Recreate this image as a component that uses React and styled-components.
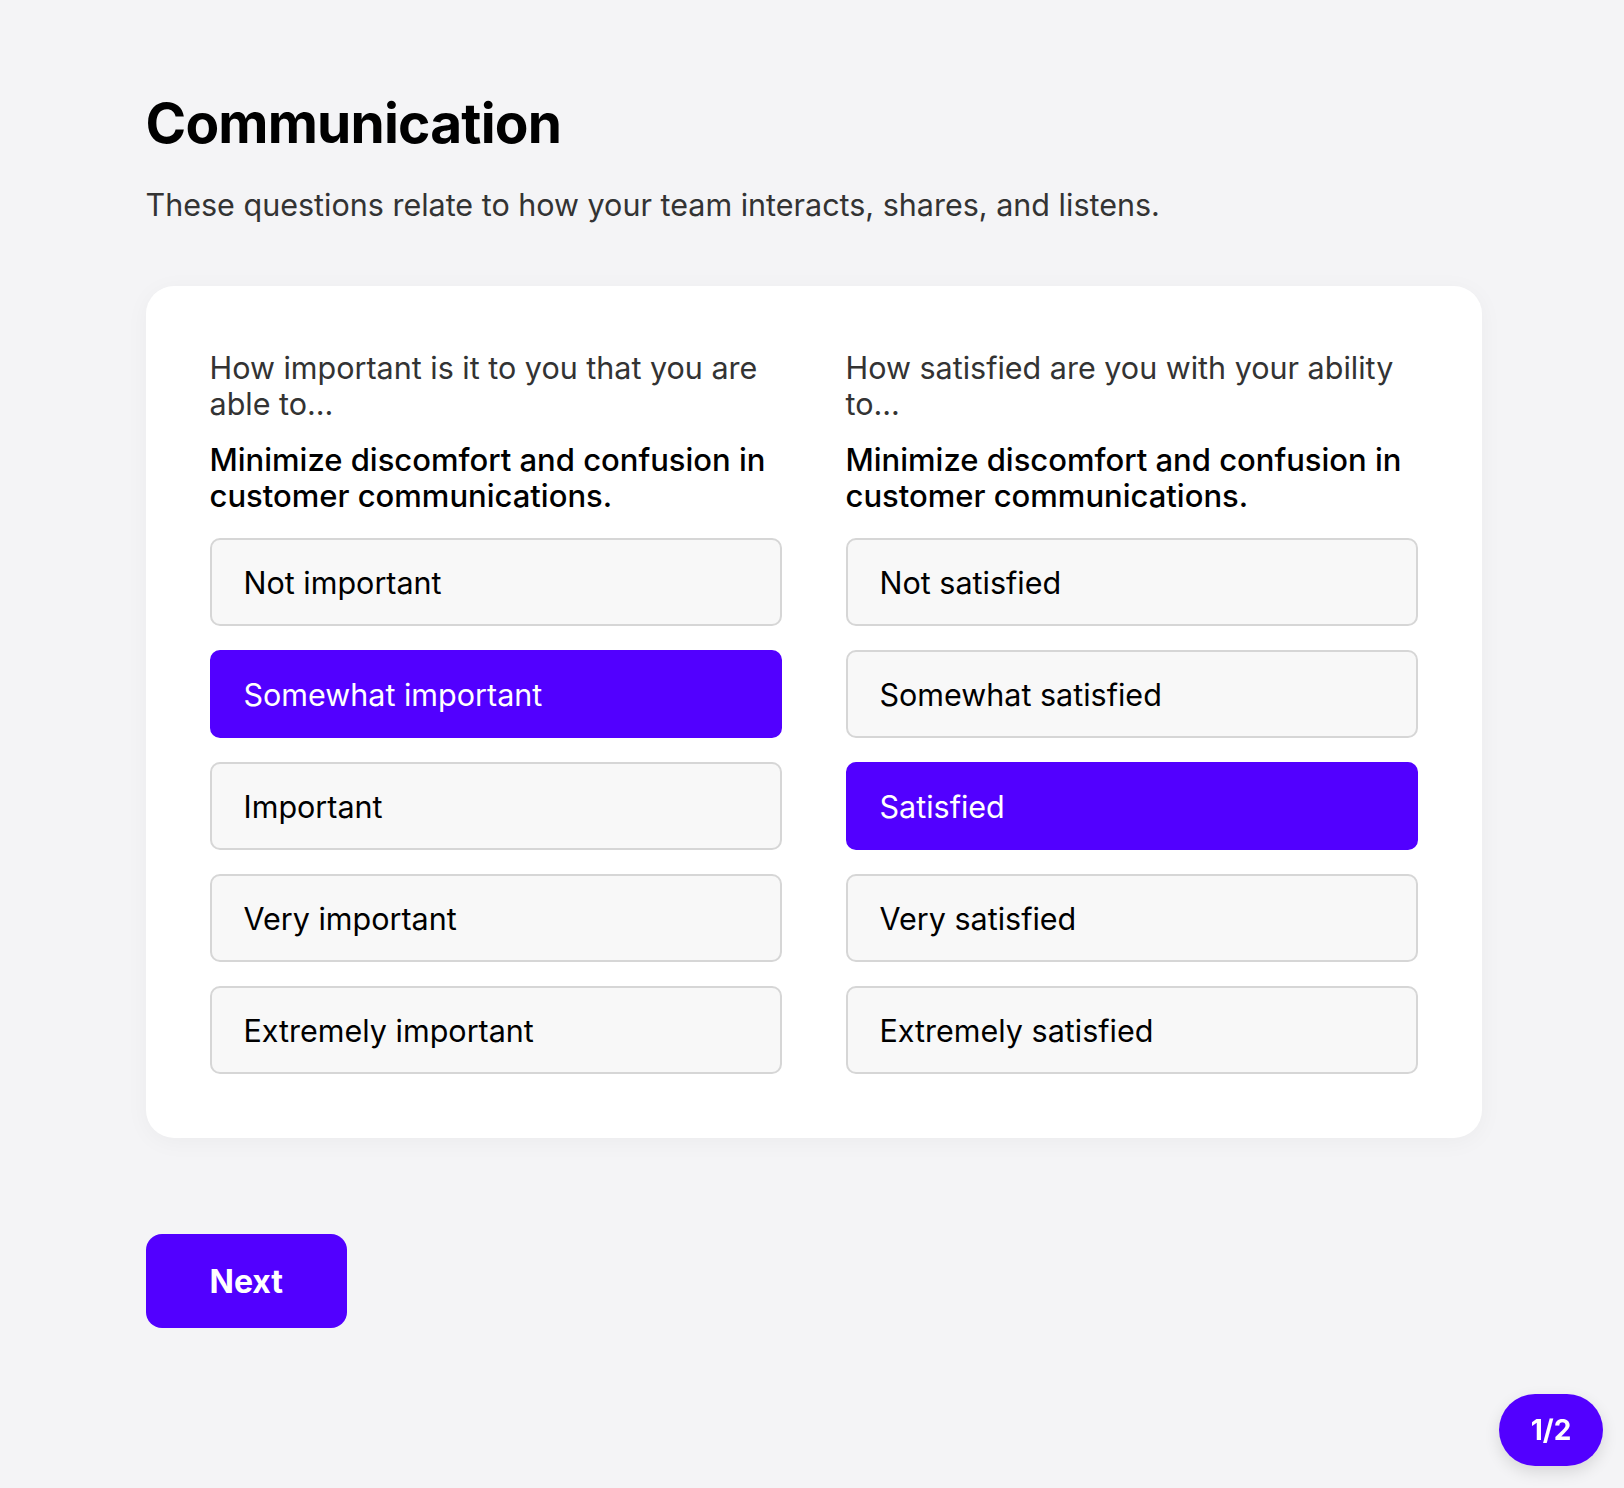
import React, { useState } from 'react';
import styled, { createGlobalStyle } from 'styled-components';

const GlobalStyle = createGlobalStyle`
  body {
    margin: 0;
    background: #f4f4f6;
    font-family: 'Inter', 'Liberation Sans', sans-serif;
    color: #000;
  }
`;

const importanceOptions = [
  'Not important',
  'Somewhat important',
  'Important',
  'Very important',
  'Extremely important',
];

const satisfactionOptions = [
  'Not satisfied',
  'Somewhat satisfied',
  'Satisfied',
  'Very satisfied',
  'Extremely satisfied',
];

const Question = ({ prompt, statement, options, selected, onSelect }) => (
  <StyledColumn>
    <StyledPrompt>{prompt}</StyledPrompt>
    <StyledStatement>{statement}</StyledStatement>
    <StyledOptions>
      {options.map((option) => (
        <StyledOption
          key={option}
          $active={selected === option}
          onClick={() => onSelect(option)}
        >
          {option}
        </StyledOption>
      ))}
    </StyledOptions>
  </StyledColumn>
);

const App = () => {
  const [importance, setImportance] = useState('Somewhat important');
  const [satisfaction, setSatisfaction] = useState('Satisfied');

  return (
    <>
      <GlobalStyle />
      <StyledPage>
        <StyledTitle>Communication</StyledTitle>
        <StyledIntro>These questions relate to how your team interacts, shares, and listens.</StyledIntro>

        <StyledCard>
          <Question
            prompt="How important is it to you that you are able to..."
            statement="Minimize discomfort and confusion in customer communications."
            options={importanceOptions}
            selected={importance}
            onSelect={setImportance}
          />
          <Question
            prompt="How satisfied are you with your ability to..."
            statement="Minimize discomfort and confusion in customer communications."
            options={satisfactionOptions}
            selected={satisfaction}
            onSelect={setSatisfaction}
          />
        </StyledCard>

        <StyledNext>Next</StyledNext>
      </StyledPage>
      <StyledStep>1/2</StyledStep>
    </>
  );
};

const StyledPage = styled.main`
  width: 1336px;
  margin: 0 auto;
  padding: 90px 0 120px 3px;
  display: flex;
  flex-direction: column;
  align-items: flex-start;
`;

const StyledTitle = styled.h1`
  margin: 0;
  font-size: 55px;
  line-height: 67px;
  font-weight: 700;
  letter-spacing: -0.8px;
`;

const StyledIntro = styled.p`
  margin: 28px 0 0;
  font-size: 30.5px;
  line-height: 39px;
  color: #333;
`;

const StyledCard = styled.section`
  margin-top: 62px;
  width: 100%;
  box-sizing: border-box;
  padding: 64px;
  background: #fff;
  border-radius: 28px;
  box-shadow: 0 4px 24px rgba(0, 0, 0, 0.04);
  display: grid;
  grid-template-columns: 1fr 1fr;
  gap: 64px;
`;

const StyledColumn = styled.div`
  display: flex;
  flex-direction: column;
`;

const StyledPrompt = styled.p`
  margin: 0;
  font-size: 30.5px;
  line-height: 36px;
  color: #333;
`;

const StyledStatement = styled.p`
  margin: 20px 0 0;
  font-size: 31px;
  line-height: 36px;
  font-weight: 500;
  color: #000;
`;

const StyledOptions = styled.div`
  margin-top: 24px;
  display: flex;
  flex-direction: column;
  gap: 24px;
`;

const StyledOption = styled.button`
  height: 88px;
  box-sizing: border-box;
  padding: 0 32px;
  text-align: left;
  font-family: inherit;
  font-size: 30.5px;
  font-weight: 400;
  border-radius: 10px;
  cursor: pointer;
  border: 2px solid ${(p) => (p.$active ? '#5200ff' : '#d6d6d6')};
  background: ${(p) => (p.$active ? '#5200ff' : '#f8f8f8')};
  color: ${(p) => (p.$active ? '#fff' : '#000')};
`;

const StyledNext = styled.button`
  margin-top: 96px;
  height: 94px;
  padding: 0 64px;
  border: none;
  border-radius: 16px;
  background: #5200ff;
  color: #fff;
  font-family: inherit;
  font-size: 32px;
  font-weight: 700;
  cursor: pointer;
`;

const StyledStep = styled.div`
  position: fixed;
  right: 21px;
  bottom: 22px;
  width: 104px;
  height: 72px;
  border-radius: 36px;
  background: #5200ff;
  color: #fff;
  display: flex;
  align-items: center;
  justify-content: center;
  font-size: 28px;
  font-weight: 700;
  box-shadow: 0 6px 16px rgba(0, 0, 0, 0.12);
`;

export default App;
